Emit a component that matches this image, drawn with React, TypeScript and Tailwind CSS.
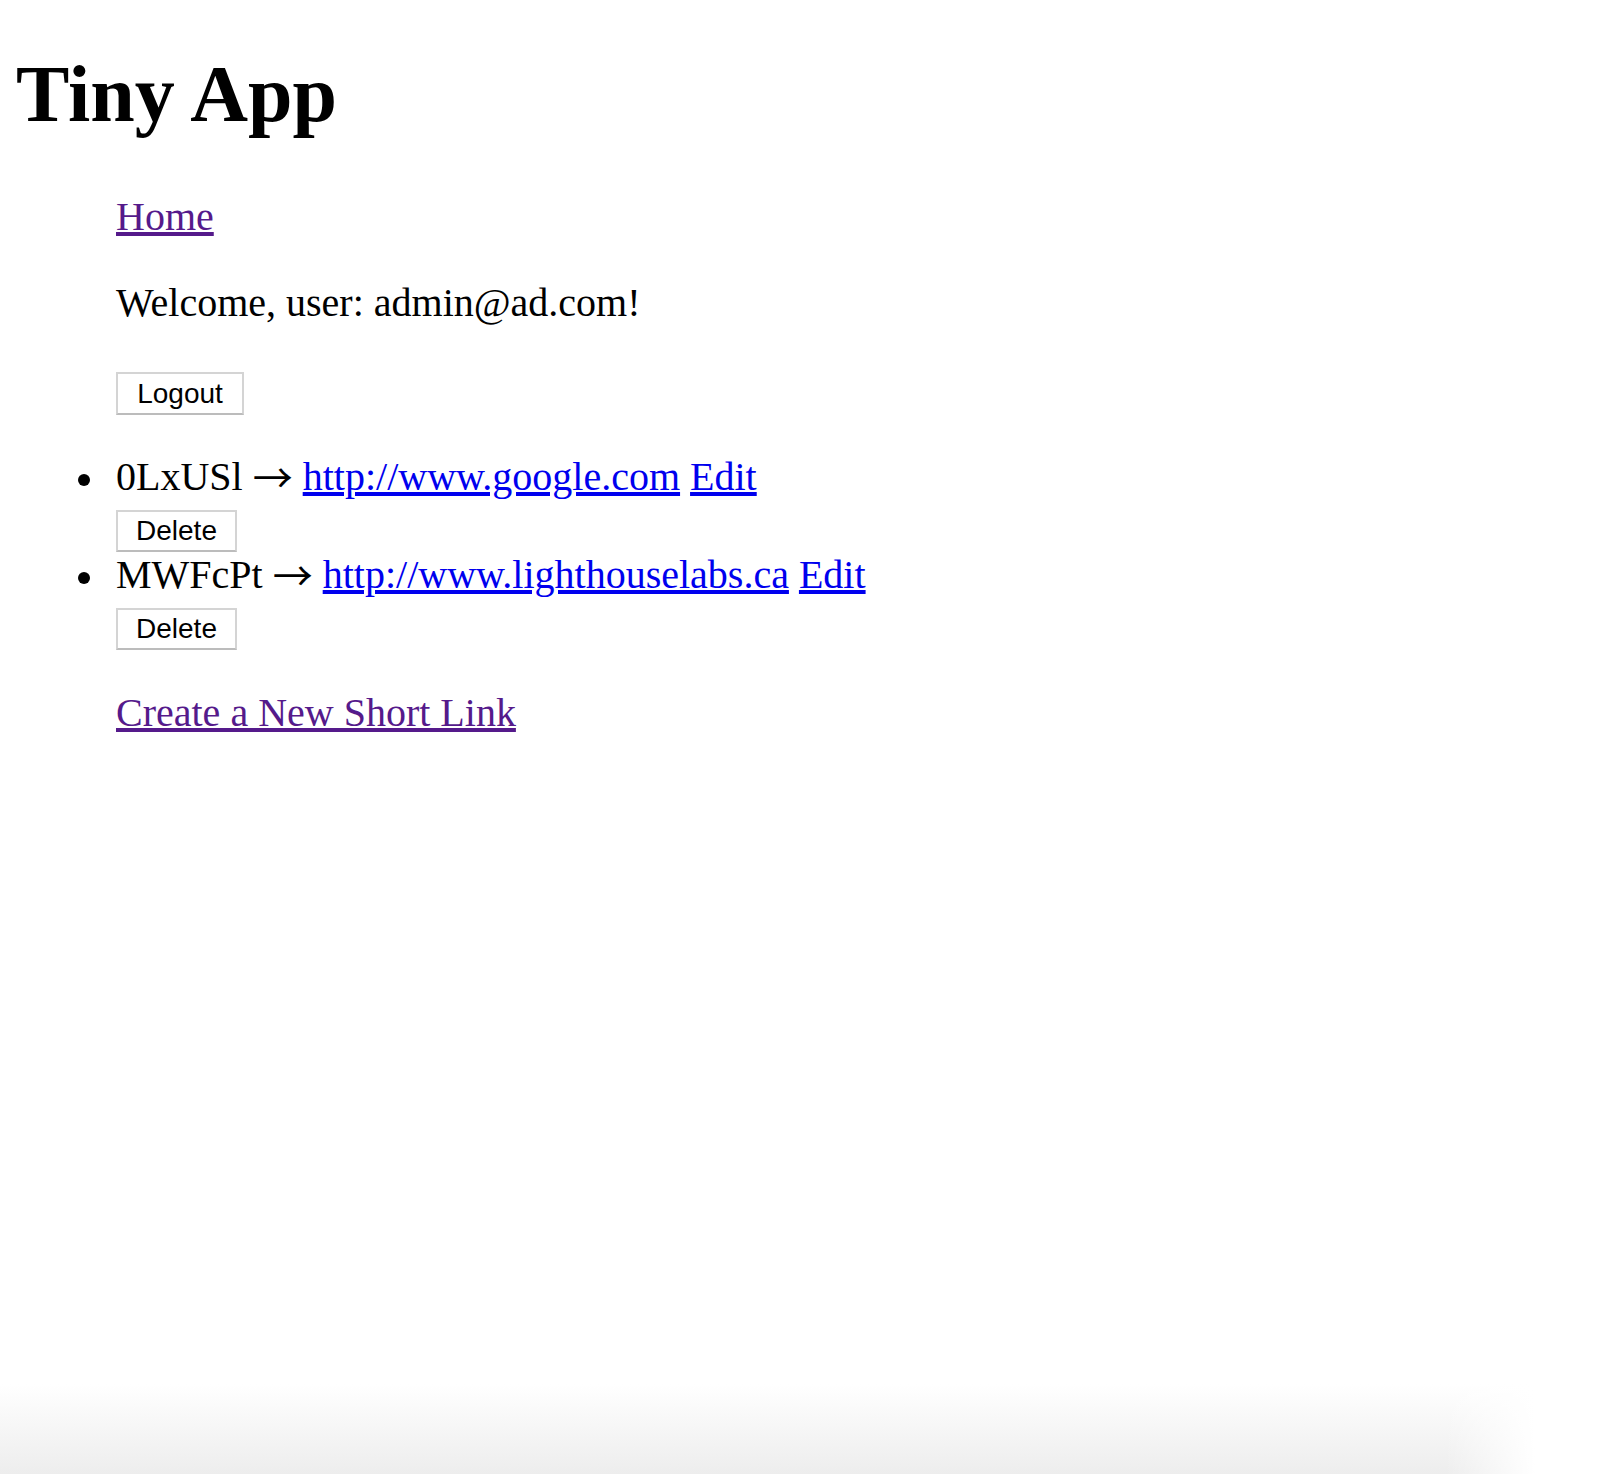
const serif = { fontFamily: '"Liberation Serif", "Times New Roman", serif' };

const urls = [
  { short: "0LxUSl", long: "http://www.google.com" },
  { short: "MWFcPt", long: "http://www.lighthouselabs.ca" },
];

function GrayButton({ label, size }: { label: string; size: "lg" | "md" }) {
  return (
    <button
      type="button"
      className={
        "flex items-center justify-center border-2 border-[#d4d4d4] border-b-[#bcbcbc] bg-white font-['Liberation_Sans',Arial,sans-serif] text-[28px] leading-none text-black " +
        (size === "lg" ? "h-[43px] w-[128px]" : "h-[42px] w-[121px]")
      }
    >
      {label}
    </button>
  );
}

export default function App() {
  return (
    <div className="flex h-[1474px] flex-col bg-white text-black" style={serif}>
      <div className="px-4">
        {/* header */}
        <h1 className="mt-[48px] text-[80px] font-bold leading-[92px]">Tiny App</h1>

        <div className="pl-[100px] text-[40px] leading-[46px]">
          <div className="mt-[54px]">
            <a href="#" className="text-[#551a8b] underline">
              Home
            </a>
          </div>
          <p className="mt-[40px]">Welcome, user: admin@ad.com!</p>
          <div className="mt-[46px]">
            <GrayButton label="Logout" size="lg" />
          </div>
        </div>

        {/* url list */}
        <ul className="mt-[39px] text-[40px] leading-[46px]">
          {urls.map((u) => (
            <li key={u.short} className="flex">
              <div className="flex w-[100px] shrink-0 justify-end pr-[26px]">
                <span className="mt-[20px] h-[12px] w-[12px] rounded-full bg-black" />
              </div>
              <div>
                <div className="h-[46px] whitespace-nowrap">
                  {u.short}{" "}
                  <span className="align-[-3px] font-['Noto_Sans_CJK_JP',sans-serif] leading-[0]">→</span>{" "}
                  <a href="#" className="text-[#0000ee] underline">
                    {u.long}
                  </a>{" "}
                  <a href="#" className="text-[#0000ee] underline">
                    Edit
                  </a>
                </div>
                <div className="mt-[10px]">
                  <GrayButton label="Delete" size="md" />
                </div>
              </div>
            </li>
          ))}
        </ul>

        <div className="mt-[40px] pl-[100px] text-[40px] leading-[46px]">
          <a href="#" className="text-[#551a8b] underline">
            Create a New Short Link
          </a>
        </div>
      </div>

      <div className="flex-1" />
      {/* window shadow at the bottom edge */}
      <div className="h-[90px] bg-[linear-gradient(to_right,transparent_1445px,#ffffff_1535px),linear-gradient(to_bottom,#ffffff,#ededed)]" />
    </div>
  );
}
